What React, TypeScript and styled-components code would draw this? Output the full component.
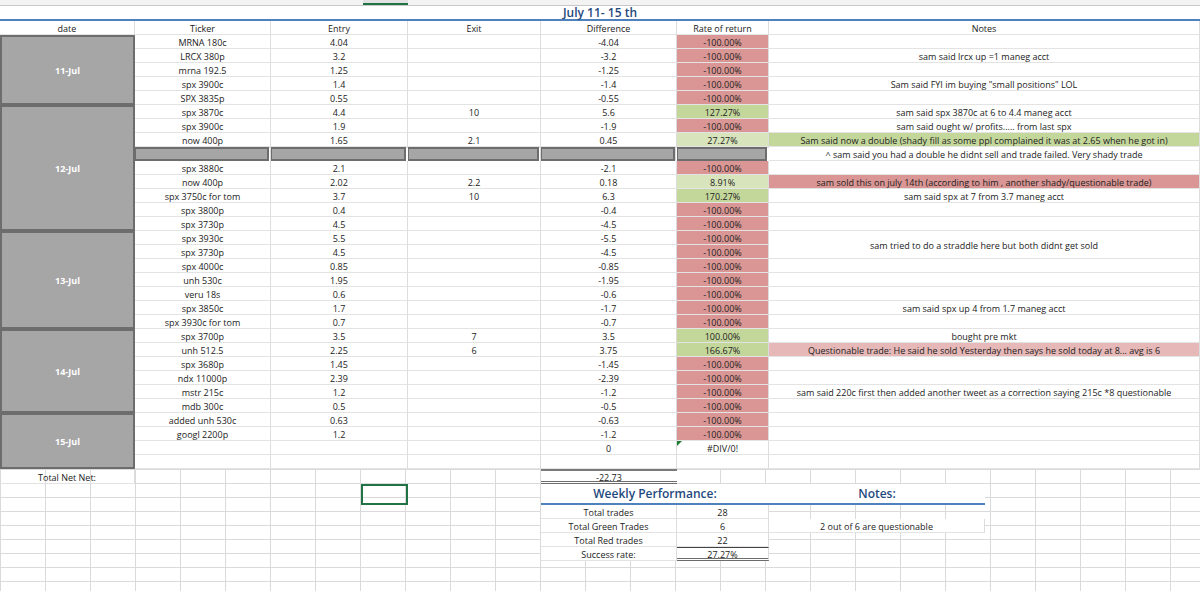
import React from "react";
import styled, { createGlobalStyle } from "styled-components";

const Global = createGlobalStyle`
  html, body { margin: 0; padding: 0; background: #fff; overflow: hidden; }
  * { box-sizing: border-box; }
`;

const RED = "#da9694";
const GREEN = "#c4d79b";
const LGREEN = "#d8e4bc";
const PINK = "#e6b8b7";

const Sheet = styled.div`
  width: 1200px;
  height: 591px;
  display: grid;
  grid-template-columns: 135px 136px 137px 133px 136px 92px 216px 215px;
  grid-template-rows: 6px 15px 14px repeat(31, 14px) 15px 21px repeat(4, 14px) 1fr;
  font-family: "Open Sans", "Noto Sans", sans-serif;
  font-size: 9px;
  color: #222;
  background-color: #fff;
  background-image:
    linear-gradient(to right, #dadada 1px, transparent 1px),
    linear-gradient(to bottom, #dadada 1px, transparent 1px);
  background-size: 45px 14px, 45px 14px;
  background-position: 0 0, 0 7px;
`;

const Cell = styled.div<{ $r: number; $c: number; $rs?: number; $cs?: number; $bg?: string }>`
  grid-row: ${(p) => p.$r} / span ${(p) => p.$rs ?? 1};
  grid-column: ${(p) => p.$c} / span ${(p) => p.$cs ?? 1};
  background: ${(p) => p.$bg ?? "#fff"};
  border-right: 1px solid #dcdcdc;
  border-bottom: 1px solid #e3e3e3;
  display: flex;
  align-items: center;
  justify-content: center;
  padding-top: 2px;
  white-space: nowrap;
  overflow: hidden;
  line-height: 1;
  position: relative;
`;

const TopStrip = styled.div`
  grid-row: 1;
  grid-column: 1 / -1;
  background: #f3f3f3;
  border-bottom: 1px solid #c8c8c8;
  display: flex;
`;

const StripMark = styled.div`
  margin-left: 363px;
  width: 45px;
  height: 100%;
  background: #e1e1e1;
  border-bottom: 2px solid #217346;
`;

const Title = styled.div`
  grid-row: 2;
  grid-column: 1 / -1;
  background: #fff;
  border-bottom: 2px solid #4f81bd;
  display: flex;
  align-items: center;
  justify-content: center;
  color: #1f497d;
  font-weight: 600;
  font-size: 12px;
`;

const DateBlock = styled.div<{ $r: number; $rs: number }>`
  grid-row: ${(p) => p.$r} / span ${(p) => p.$rs};
  grid-column: 1;
  background: #a6a6a6;
  border: 2px solid #6d6d6d;
  display: flex;
  align-items: center;
  justify-content: center;
  color: #fff;
  font-weight: 700;
  font-size: 9px;
`;

const GrayCell = styled.div<{ $c: number }>`
  grid-row: 12;
  grid-column: ${(p) => p.$c};
  background: #a6a6a6;
  border: 2px solid #6d6d6d;
  border-left-width: 1px;
  margin-right: 2px;
`;

const Corner = styled.span`
  position: absolute;
  left: 0;
  top: 0;
  width: 0;
  height: 0;
  border-top: 5px solid #1e7b34;
  border-right: 5px solid transparent;
`;

const TotalCell = styled(Cell)`
  border-top: 2px solid #7a7a7a;
  border-bottom: 3px double #6d6d6d;
  border-right: none;
`;

const WeeklyHead = styled.div<{ $c: number; $cs: number }>`
  grid-row: 36;
  grid-column: ${(p) => p.$c} / span ${(p) => p.$cs};
  background: #fff;
  border-bottom: 2px solid #4f81bd;
  display: flex;
  align-items: flex-end;
  justify-content: center;
  color: #1f497d;
  font-weight: 600;
  font-size: 12px;
  padding-bottom: 1px;
`;

const RateFinal = styled(Cell)`
  border-top: 1px solid #444;
  border-bottom: 3px double #6d6d6d;
`;

const Selected = styled.div`
  grid-row: 36;
  grid-column: 3;
  margin-left: 90px;
  width: 47px;
  border: 2px solid #217346;
`;

type Row = [string, string, string, string, string, string, string?, string?];
const r = "r";
const rows: Row[] = [
  ["MRNA 180c", "4.04", "", "-4.04", "-100.00%", r],
  ["LRCX 380p", "3.2", "", "-3.2", "-100.00%", r, "sam said lrcx up  =1 maneg acct"],
  ["mrna 192.5", "1.25", "", "-1.25", "-100.00%", r],
  ["spx 3900c", "1.4", "", "-1.4", "-100.00%", r, "Sam said FYI im buying \"small positions\" LOL"],
  ["SPX 3835p", "0.55", "", "-0.55", "-100.00%", r],
  ["spx 3870c", "4.4", "10", "5.6", "127.27%", "g", "sam said spx 3870c at 6 to 4.4 maneg acct"],
  ["spx 3900c", "1.9", "", "-1.9", "-100.00%", r, "sam said ought w/ profits..... from last spx"],
  ["now 400p", "1.65", "2.1", "0.45", "27.27%", "lg", "Sam said now a double (shady fill as some ppl complained it was at 2.65 when he got in)", "g"],
  ["__gray", "", "", "", "", "", "^ sam said you had a double he didnt sell and trade failed. Very shady trade"],
  ["spx 3880c", "2.1", "", "-2.1", "-100.00%", r],
  ["now 400p", "2.02", "2.2", "0.18", "8.91%", "lg", "sam sold this on july 14th (according to him , another shady/questionable trade)", "r"],
  ["spx 3750c for tom", "3.7", "10", "6.3", "170.27%", "g", "sam said spx at 7 from 3.7 maneg acct"],
  ["spx 3800p", "0.4", "", "-0.4", "-100.00%", r],
  ["spx 3730p", "4.5", "", "-4.5", "-100.00%", r],
  ["spx 3930c", "5.5", "", "-5.5", "-100.00%", r, "__span2"],
  ["spx 3730p", "4.5", "", "-4.5", "-100.00%", r, "__skip"],
  ["spx 4000c", "0.85", "", "-0.85", "-100.00%", r],
  ["unh 530c", "1.95", "", "-1.95", "-100.00%", r],
  ["veru 18s", "0.6", "", "-0.6", "-100.00%", r],
  ["spx 3850c", "1.7", "", "-1.7", "-100.00%", r, "sam said spx up 4 from 1.7 maneg acct"],
  ["spx 3930c for tom", "0.7", "", "-0.7", "-100.00%", r],
  ["spx 3700p", "3.5", "7", "3.5", "100.00%", "g", "bought pre mkt"],
  ["unh 512.5", "2.25", "6", "3.75", "166.67%", "g", "Questionable trade: He said he sold Yesterday then says he sold today at 8... avg is 6", "p"],
  ["spx 3680p", "1.45", "", "-1.45", "-100.00%", r],
  ["ndx 11000p", "2.39", "", "-2.39", "-100.00%", r],
  ["mstr 215c", "1.2", "", "-1.2", "-100.00%", r, "sam said 220c first then added another tweet as a correction saying 215c *8 questionable"],
  ["mdb 300c", "0.5", "", "-0.5", "-100.00%", r],
  ["added unh 530c", "0.63", "", "-0.63", "-100.00%", r],
  ["googl 2200p", "1.2", "", "-1.2", "-100.00%", r],
  ["", "", "", "0", "#DIV/0!", "div"],
  ["", "", "", "", "", ""],
];

const bgOf = (k?: string) =>
  k === "r" ? RED : k === "g" ? GREEN : k === "lg" ? LGREEN : k === "p" ? PINK : "#fff";

const dates: [string, number, number][] = [
  ["11-Jul", 4, 5],
  ["12-Jul", 9, 9],
  ["13-Jul", 18, 7],
  ["14-Jul", 25, 6],
  ["15-Jul", 31, 4],
];

const headers = ["date", "Ticker", "Entry", "Exit", "Difference", "Rate of return"];

export default function App() {
  return (
    <>
      <Global />
      <Sheet>
        <TopStrip>
          <StripMark />
        </TopStrip>
        <Title>July 11- 15 th</Title>
        {headers.map((h, i) => (
          <Cell key={h} $r={3} $c={i + 1}>
            {h}
          </Cell>
        ))}
        <Cell $r={3} $c={7} $cs={2}>Notes</Cell>
        {rows.map((row, i) => {
          const rr = i + 4;
          const [t, e, x, d, rate, rb, note, nb] = row;
          const noteEl =
            note === "__skip" ? null : (
              <Cell key="n" $r={rr} $c={7} $cs={2} $rs={note === "__span2" ? 2 : 1} $bg={bgOf(nb)}>
                {note === "__span2" ? "sam tried to do a straddle here but both didnt get sold" : note ?? ""}
              </Cell>
            );
          if (t === "__gray") {
            return (
              <React.Fragment key={i}>
                {[2, 3, 4, 5, 6].map((c) => (
                  <GrayCell key={c} $c={c} />
                ))}
                {noteEl}
              </React.Fragment>
            );
          }
          return (
            <React.Fragment key={i}>
              <Cell $r={rr} $c={2}>{t}</Cell>
              <Cell $r={rr} $c={3}>{e}</Cell>
              <Cell $r={rr} $c={4}>{x}</Cell>
              <Cell $r={rr} $c={5}>{d}</Cell>
              <Cell $r={rr} $c={6} $bg={bgOf(rb)}>
                {rb === "div" && <Corner />}
                {rate}
              </Cell>
              {noteEl}
            </React.Fragment>
          );
        })}
        {dates.map(([d, s, n]) => (
          <DateBlock key={d} $r={s} $rs={n}>
            {d}
          </DateBlock>
        ))}
        <Cell $r={35} $c={1} $bg="transparent">Total Net Net:</Cell>
        <TotalCell $r={35} $c={5}>-22.73</TotalCell>
        <WeeklyHead $c={5} $cs={2}>Weekly Performance:</WeeklyHead>
        <WeeklyHead $c={7} $cs={1}>Notes:</WeeklyHead>
        <Selected />
        <Cell $r={37} $c={5}>Total trades</Cell>
        <Cell $r={37} $c={6}>28</Cell>
        <Cell $r={38} $c={5}>Total Green Trades</Cell>
        <Cell $r={38} $c={6}>6</Cell>
        <Cell $r={38} $c={7}>2 out of 6 are questionable</Cell>
        <Cell $r={39} $c={5}>Total Red trades</Cell>
        <Cell $r={39} $c={6}>22</Cell>
        <Cell $r={40} $c={5}>Success rate:</Cell>
        <RateFinal $r={40} $c={6}>27.27%</RateFinal>
      </Sheet>
    </>
  );
}
